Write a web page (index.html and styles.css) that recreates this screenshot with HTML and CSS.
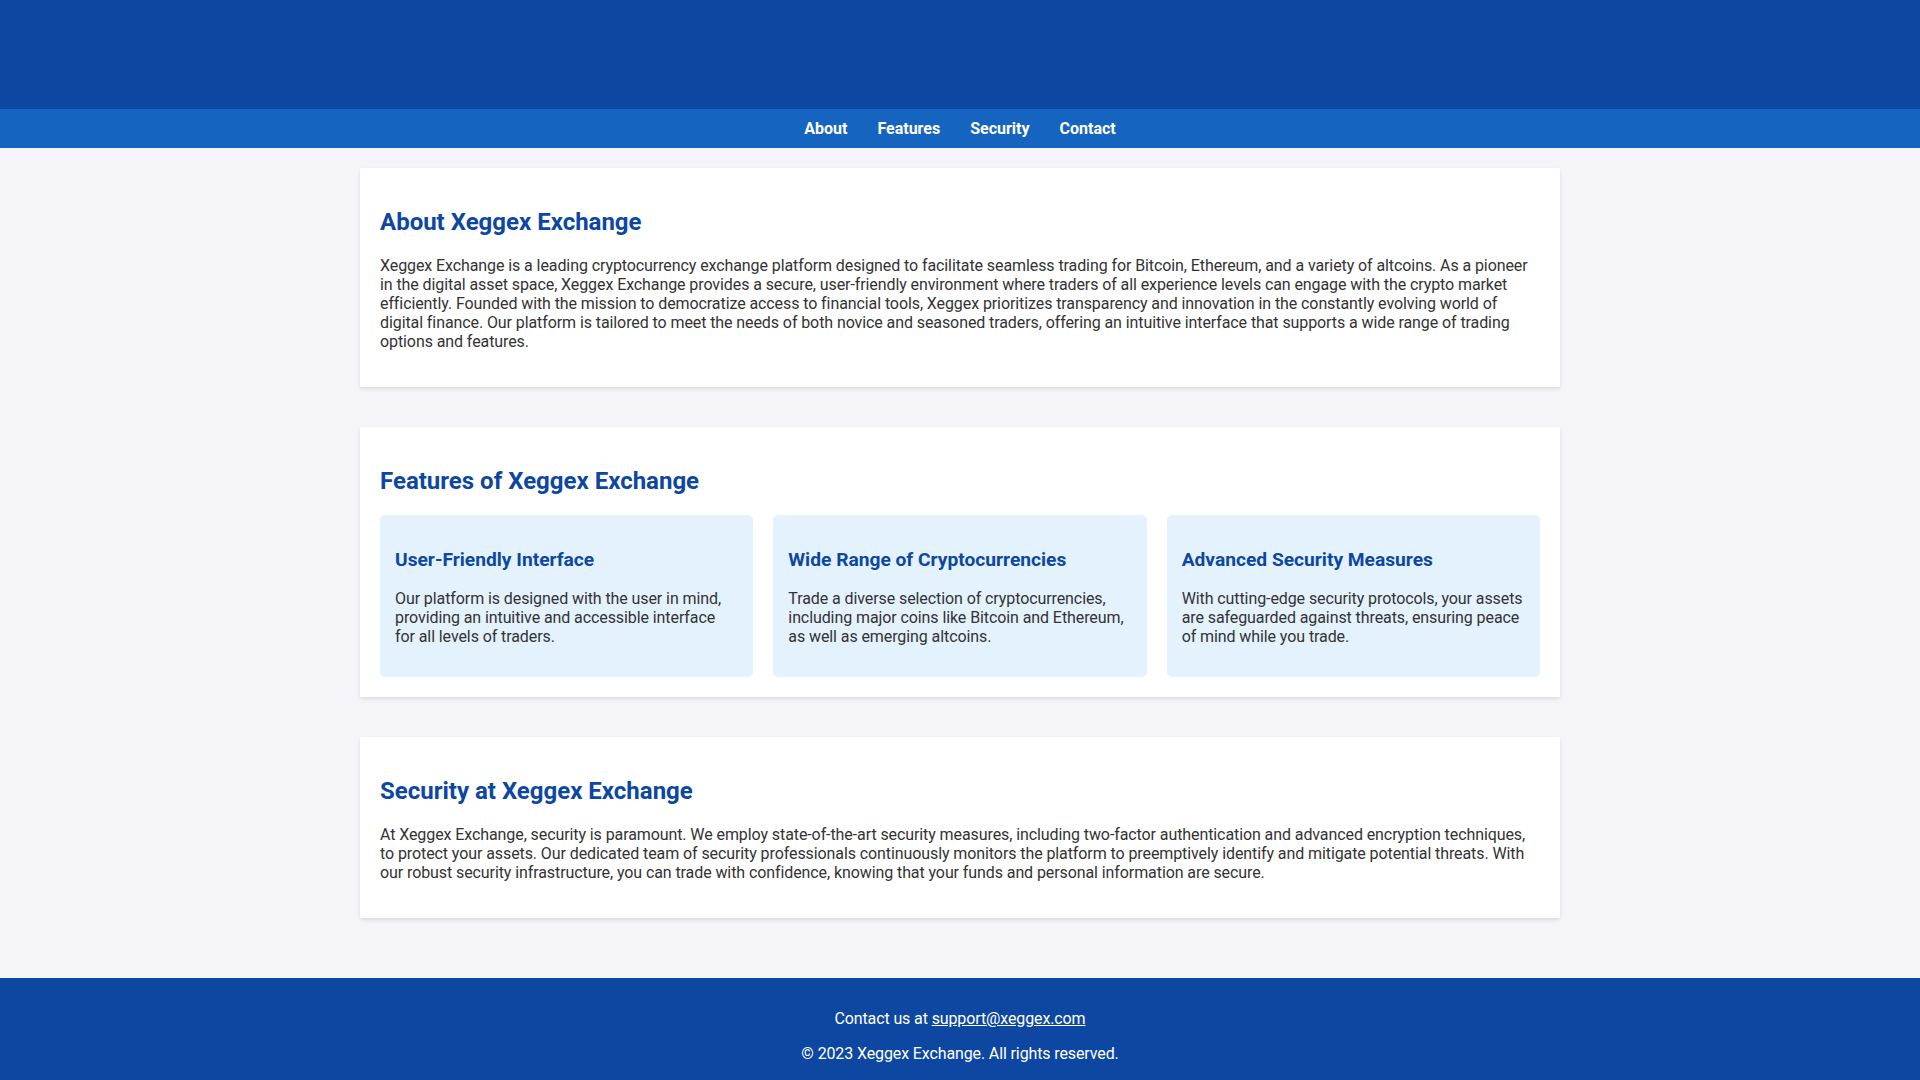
FILE: index.html
```html
<!DOCTYPE html>
<html lang="en">
<head>
<meta charset="UTF-8">
<title>Xeggex Exchange</title>
<link rel="stylesheet" href="styles.css">
</head>
<body>
<header class="site-header"></header>
<nav class="site-nav">
  <a href="#about">About</a>
  <a href="#features">Features</a>
  <a href="#security">Security</a>
  <a href="#contact">Contact</a>
</nav>
<main class="content">
  <section class="panel" id="about">
    <h2>About Xeggex Exchange</h2>
    <p>Xeggex Exchange is a leading cryptocurrency exchange platform designed to facilitate seamless trading for Bitcoin, Ethereum, and a variety of altcoins. As a pioneer in the digital asset space, Xeggex Exchange provides a secure, user-friendly environment where traders of all experience levels can engage with the crypto market efficiently. Founded with the mission to democratize access to financial tools, Xeggex prioritizes transparency and innovation in the constantly evolving world of digital finance. Our platform is tailored to meet the needs of both novice and seasoned traders, offering an intuitive interface that supports a wide range of trading options and features.</p>
  </section>
  <section class="panel" id="features">
    <h2>Features of Xeggex Exchange</h2>
    <div class="feature-grid">
      <div class="feature">
        <h3>User-Friendly Interface</h3>
        <p>Our platform is designed with the user in mind, providing an intuitive and accessible interface for all levels of traders.</p>
      </div>
      <div class="feature">
        <h3>Wide Range of Cryptocurrencies</h3>
        <p>Trade a diverse selection of cryptocurrencies, including major coins like Bitcoin and Ethereum, as well as emerging altcoins.</p>
      </div>
      <div class="feature">
        <h3>Advanced Security Measures</h3>
        <p>With cutting-edge security protocols, your assets are safeguarded against threats, ensuring peace of mind while you trade.</p>
      </div>
    </div>
  </section>
  <section class="panel" id="security">
    <h2>Security at Xeggex Exchange</h2>
    <p>At Xeggex Exchange, security is paramount. We employ state-of-the-art security measures, including two-factor authentication and advanced encryption techniques, to protect your assets. Our dedicated team of security professionals continuously monitors the platform to preemptively identify and mitigate potential threats. With our robust security infrastructure, you can trade with confidence, knowing that your funds and personal information are secure.</p>
  </section>
</main>
<footer class="site-footer" id="contact">
  <p>Contact us at <a href="mailto:support@xeggex.com">support@xeggex.com</a></p>
  <p>&copy; 2023 Xeggex Exchange. All rights reserved.</p>
</footer>
</body>
</html>
```
FILE: styles.css
```css
body {
  margin: 0;
  font-family: Roboto, "Liberation Sans", Arial, sans-serif;
  font-size: 16px;
  line-height: normal;
  color: #333;
  background: #f4f4f9;
}

.site-header {
  height: 109px;
  background: #0d47a1;
}

.site-nav {
  display: flex;
  justify-content: center;
  background: #1565c0;
  padding: 10px 0;
}

.site-nav a {
  color: #fff;
  font-weight: 700;
  text-decoration: none;
  margin: 0 15px;
}

.content {
  padding: 20px;
}

.panel {
  max-width: 1160px;
  margin: 0 auto 40px;
  padding: 20px;
  background: #fff;
  box-shadow: 0 2px 4px rgba(0, 0, 0, 0.1);
}

.panel::before,
.panel::after {
  content: "";
  display: table;
}

.panel h2 {
  color: #0d47a1;
  font-size: 24px;
  margin: 20px 0;
}

.panel p {
  margin: 16px 0;
  letter-spacing: -0.09px;
}

.feature-grid {
  display: grid;
  grid-template-columns: repeat(3, 1fr);
  gap: 20px;
}

.feature {
  background: #e3f2fd;
  border-radius: 5px;
  padding: 15px;
}

.feature::before,
.feature::after {
  content: "";
  display: table;
}

.feature h3 {
  color: #0d47a1;
  font-size: 19.2px;
  line-height: 22px;
  margin: 18.5px 0;
}

.site-footer {
  background: #0d47a1;
  color: #fff;
  text-align: center;
  padding: 15px 20px;
}

.site-footer p {
  margin: 16px 0;
  letter-spacing: -0.12px;
}

.site-footer a {
  color: #fff;
}
```
